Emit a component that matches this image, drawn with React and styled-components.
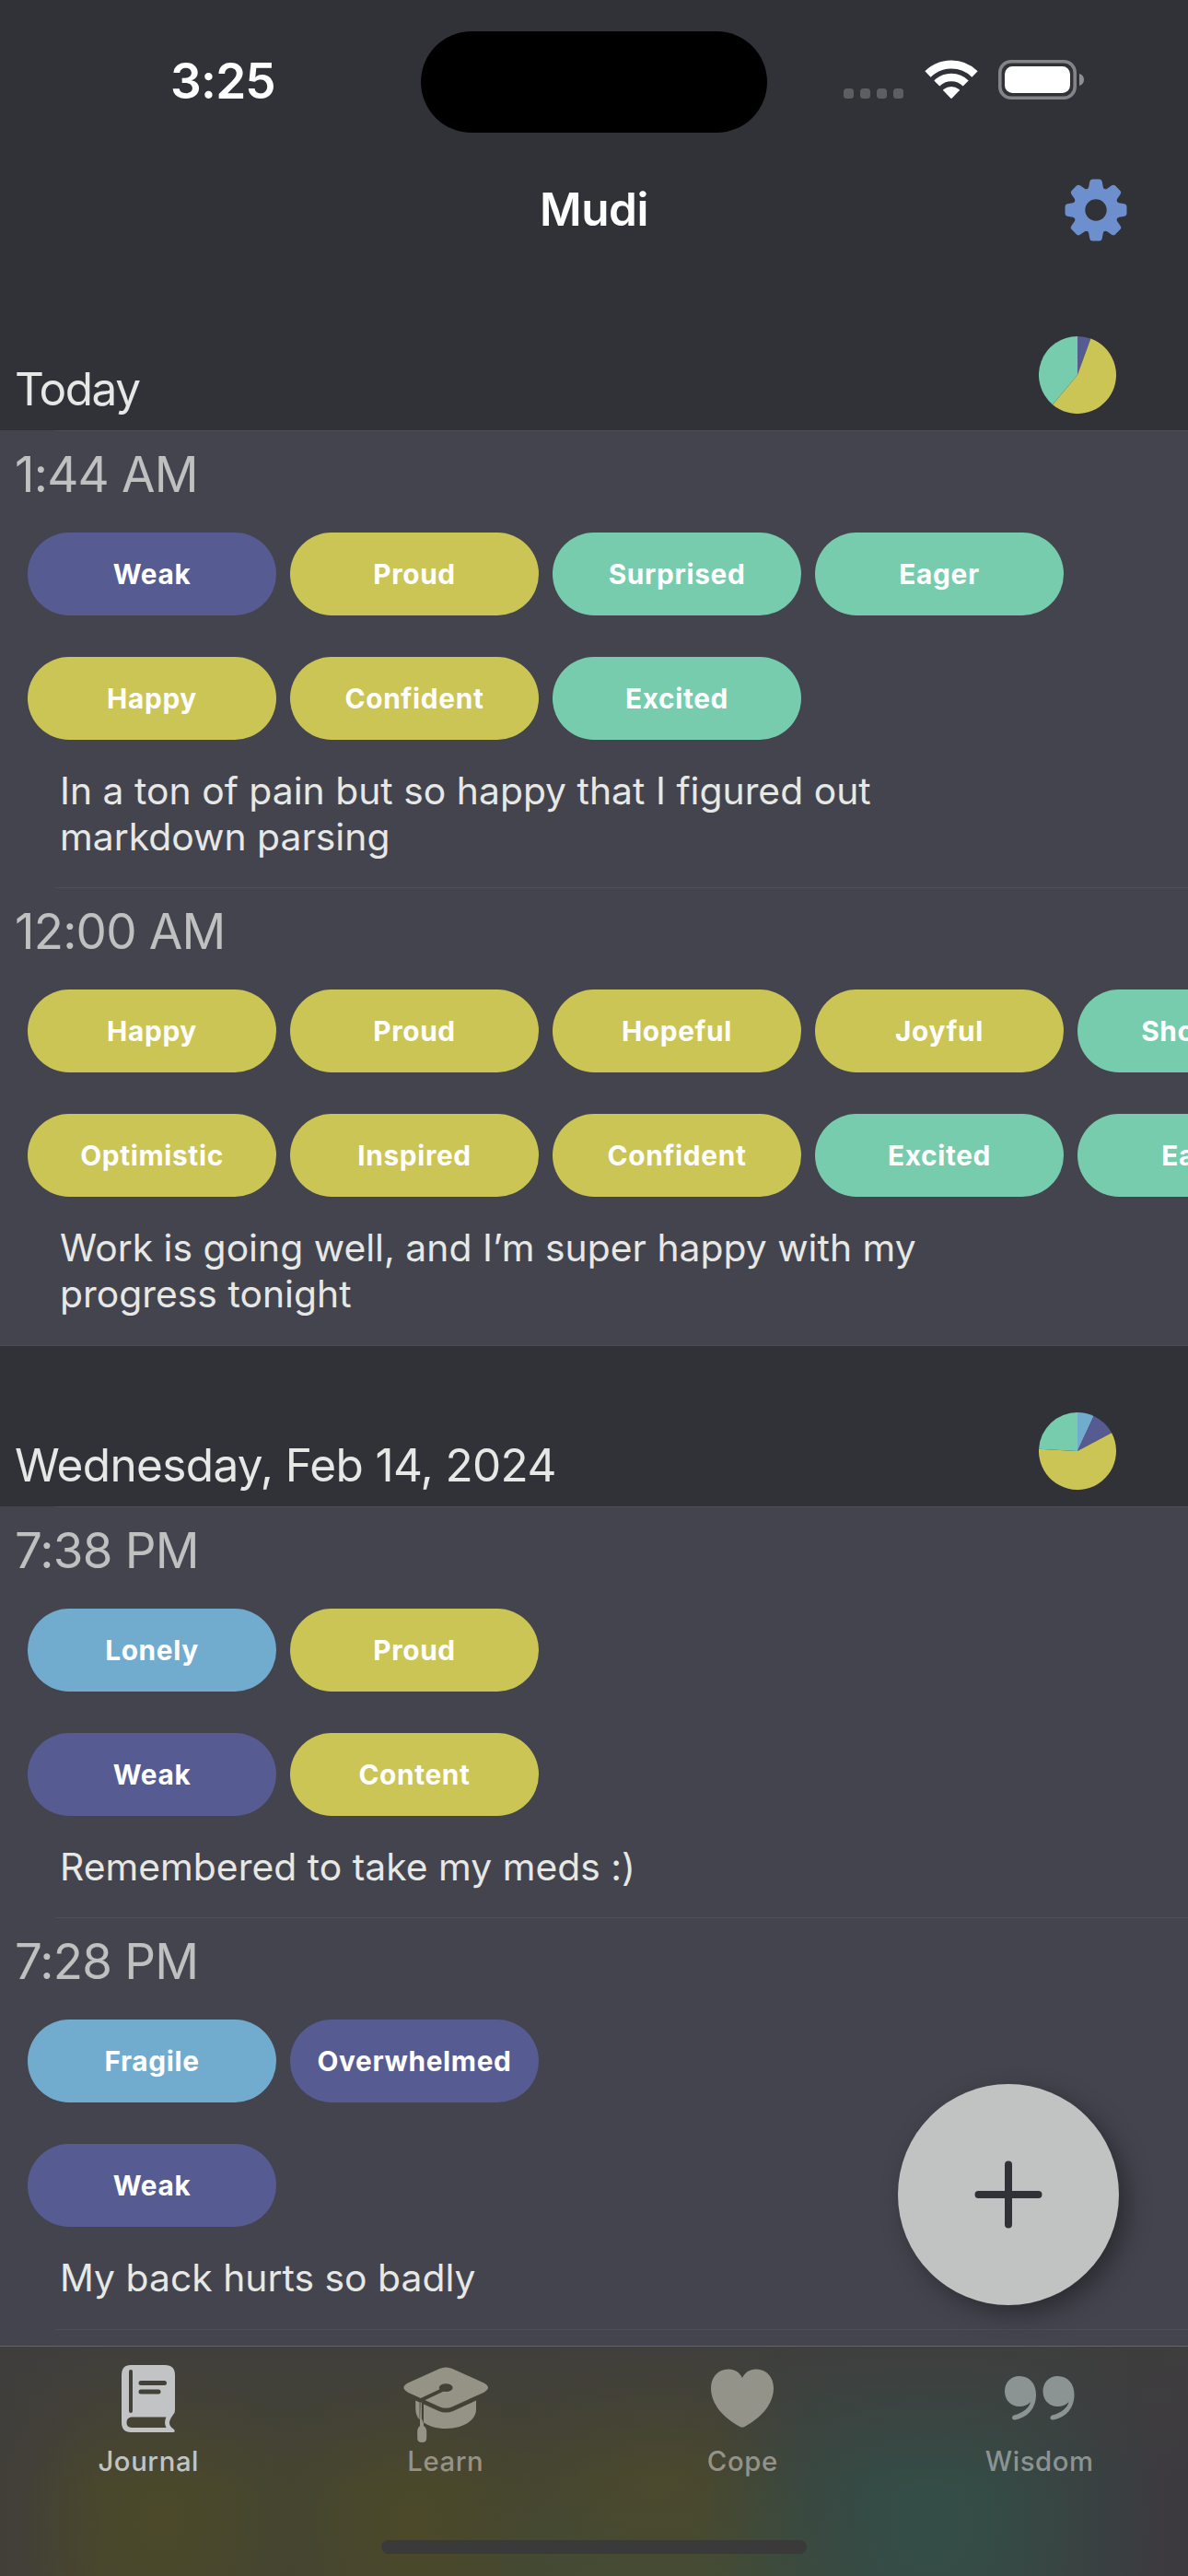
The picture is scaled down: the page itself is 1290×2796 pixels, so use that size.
import React from "react";
import styled, { createGlobalStyle } from "styled-components";

const colors = {
  base: "#313237",
  panel: "#44444e",
  yellow: "#cbc555",
  green: "#76ccad",
  purple: "#565b92",
  blue: "#71accf",
  silver: "#c1c3c2",
  text: "#e6e8e6",
};

const Global = createGlobalStyle`
  * { box-sizing: border-box; }
  body {
    margin: 0;
    background: ${colors.base};
    font-family: Inter, "Liberation Sans", sans-serif;
  }
`;

const Screen = styled.div`
  position: relative;
  display: flex;
  flex-direction: column;
  width: 1290px;
  height: 2796px;
  overflow: hidden;
  background: ${colors.base};
`;

const StatusBar = styled.header`
  display: grid;
  flex: none;
  grid-template-columns: 457px 376px 457px;
  height: 177px;
  padding-top: 33px;
  align-items: start;
`;

const Clock = styled.div`
  padding-left: 27px;
  line-height: 111px;
  text-align: center;
  font-size: 53px;
  font-weight: 600;
  letter-spacing: -0.8px;
  color: #fff;
`;

const Island = styled.div`
  height: 110px;
  margin-top: 1px;
  border-radius: 55px;
  background: #000;
`;

const Indicators = styled.div`
  display: flex;
  align-items: flex-end;
  height: 75px;
  padding-left: 83px;
`;

const Dot = styled.i`
  width: 11px;
  height: 11px;
  margin-bottom: 1px;
  border-radius: 3.5px;
  background: #5e5d62;

  & + & { margin-left: 7px; }
`;

const WifiIcon = styled.svg`
  margin-left: 23px;
`;

const BatteryIcon = styled.svg`
  margin-left: 22px;
`;

const NavBar = styled.nav`
  display: grid;
  flex: none;
  grid-template-columns: 1fr 1fr 1fr;
  align-items: center;
  height: 102px;
  padding: 0 65px;
`;

const Title = styled.h1`
  grid-column: 2;
  margin: 0;
  padding-bottom: 2px;
  text-align: center;
  font-size: 49.5px;
  line-height: 60px;
  font-weight: 600;
  letter-spacing: -0.5px;
  color: #fff;
`;

const GearButton = styled.button`
  justify-self: end;
  display: flex;
  padding: 0;
  border: 0;
  background: none;
`;

const List = styled.main`
  flex: 1;
  min-height: 0;
  display: flex;
  flex-direction: column;
  padding-top: 13px;
`;

const DayHeader = styled.div`
  display: flex;
  flex: none;
  justify-content: space-between;
  align-items: flex-end;
  height: 175px;
  padding: 0 78px 18px 16px;
  border-top: 1px solid ${(p) => (p.$ruled ? "#4b4b52" : "transparent")};
`;

const DayName = styled.h2`
  margin: 0 0 -3px;
  font-size: 49.5px;
  line-height: 60px;
  font-weight: 400;
  letter-spacing: ${(p) => p.$tracking}px;
  color: ${colors.text};
`;

const Entry = styled.article`
  flex: none;
  height: ${(p) => p.$height}px;
  background: linear-gradient(#4e4e55, #4e4e55) 60px 0 / 100% 1px no-repeat ${colors.panel};
`;

const Time = styled.h3`
  margin: 0;
  padding: 15px 0 0 16px;
  height: 111px;
  font-size: 52.9px;
  line-height: 66px;
  font-weight: 400;
  letter-spacing: -0.8px;
  color: #c0c0c0;
`;

const MoodRows = styled.div`
  display: flex;
  flex-direction: column;
  gap: 45px;
  overflow: hidden;
`;

const MoodRow = styled.div`
  display: flex;
  gap: 15px;
  padding-left: 30px;
`;

const Pill = styled.span`
  flex: none;
  width: 270px;
  height: 90px;
  border-radius: 45px;
  background: ${(p) => colors[p.$tone]};
  color: #fff;
  text-align: center;
  font-size: 29.8px;
  line-height: 91px;
  font-weight: 700;
  letter-spacing: 0.65px;
`;

const Note = styled.p`
  width: 1040px;
  margin: 30px 0 0 65px;
  font-size: 40.8px;
  line-height: 50px;
  letter-spacing: 0.03px;
  white-space: pre-line;
  color: ${colors.text};
`;

const AddButton = styled.button`
  position: absolute;
  right: 75px;
  top: 2262px;
  display: flex;
  align-items: center;
  justify-content: center;
  width: 240px;
  height: 240px;
  padding: 0 1px 1px 0;
  border: 0;
  border-radius: 50%;
  background: ${colors.silver};
  box-shadow: 9px 9px 24px rgba(20, 20, 22, 0.5);
`;

const TabBar = styled.footer`
  position: absolute;
  left: 0;
  right: 0;
  bottom: 0;
  display: flex;
  flex-direction: column;
  align-items: center;
  height: 250px;
  border-top: 1px solid #64656b;
  background:
    linear-gradient(rgba(63, 62, 62, 0.85), rgba(63, 62, 62, 0) 60%),
    radial-gradient(ellipse 250px 330px at 1010px 190px, #344d46 12%, rgba(52, 77, 70, 0.45) 55%, rgba(52, 77, 70, 0) 100%),
    radial-gradient(ellipse 150px 190px at 175px 190px, #4b492a 10%, rgba(75, 73, 42, 0) 100%),
    radial-gradient(ellipse 150px 190px at 450px 190px, #4b492a 10%, rgba(75, 73, 42, 0) 100%),
    radial-gradient(ellipse 170px 170px at 715px 130px, #4b492d 10%, rgba(75, 73, 45, 0) 100%),
    radial-gradient(ellipse 260px 140px at 710px 255px, #424e36 10%, rgba(66, 78, 54, 0) 100%),
    linear-gradient(90deg, #413f39, #464431 9%, #454431 58%, #3f443b 66%, #3b4442 74%, #3b4341 84%, #3b3c3f 93%, #3d3a3f);
`;

const Tabs = styled.div`
  display: grid;
  grid-template-columns: repeat(4, 1fr);
  width: 1290px;
  height: 210px;
`;

const Tab = styled.a`
  display: flex;
  flex-direction: column;
  align-items: center;
  padding-top: 12px;
  color: ${(p) => p.$color};
  font-size: 29.3px;
  line-height: 34px;
  font-weight: 500;
  letter-spacing: 0.6px;

  svg { height: 96px; }
`;

const HomeIndicator = styled.div`
  width: 462px;
  height: 15px;
  border-radius: 8px;
  background: #3a3a3a;
`;

const Wifi = () => (
  <WifiIcon width="58" height="43" viewBox="0 0 58 43">
    <g fill="none" stroke="#fff">
      <path d="M3.5 15.5 A36.4 36.4 0 0 1 54.5 15.5" strokeWidth="9" />
      <path d="M13.3 25.5 A22.3 22.3 0 0 1 44.7 25.5" strokeWidth="8.6" />
    </g>
    <path d="M20.3 33.3 Q19.8 32.6 20.5 32 Q29 26 37.5 32 Q38.2 32.6 37.7 33.3 L29.8 41.6 Q29 42.4 28.2 41.6 Z" fill="#fff" />
  </WifiIcon>
);

const Battery = () => (
  <BatteryIcon width="94" height="43" viewBox="0 0 94 43">
    <rect x="1.8" y="1.8" width="81.4" height="39.4" rx="12" fill="none" stroke="#848388" strokeWidth="3.6" />
    <rect x="7" y="7" width="71" height="29" rx="8.5" fill="#fff" />
    <path d="M88 15 C91.5 16 93 18.5 93 21.5 C93 24.5 91.5 27 88 28 Z" fill="#8f8e92" />
  </BatteryIcon>
);

const Gear = () => (
  <svg width="70" height="70" viewBox="-35 -35 70 70">
    <mask id="gear-hole">
      <rect x="-35" y="-35" width="70" height="70" fill="#fff" />
      <circle r="11.7" fill="#000" />
    </mask>
    <g fill="#6d8fcd" mask="url(#gear-hole)">
      <circle r="24.4" />
      {[0, 45, 90, 135, 180, 225, 270, 315].map((a) => (
        <path
          key={a}
          transform={`rotate(${a})`}
          d="M-10.5 -22 Q-8.2 -23.2 -7.8 -25 L-6.7 -31 Q-6.2 -33.5 -3.8 -33.5 H3.8 Q6.2 -33.5 6.7 -31 L7.8 -25 Q8.2 -23.2 10.5 -22 Z"
        />
      ))}
    </g>
  </svg>
);

const Pie = ({ slices }) => {
  const r = 42;
  const total = slices.reduce((sum, [n]) => sum + n, 0);
  const at = (n) => {
    const a = (n / total) * Math.PI * 2;
    return `${r * Math.sin(a)} ${-r * Math.cos(a)}`;
  };
  let start = 0;
  return (
    <svg width="84" height="84" viewBox="-42 -42 84 84">
      {slices.map(([n, tone]) => {
        const from = start;
        start += n;
        return (
          <path key={tone} fill={colors[tone]} d={`M0 0 L${at(from)} A${r} ${r} 0 ${n * 2 > total ? 1 : 0} 1 ${at(start)} Z`} />
        );
      })}
    </svg>
  );
};

const BookIcon = () => (
  <svg width="60" viewBox="0 0 60 96" fill="currentColor">
    <path
      fillRule="evenodd"
      d="M11 8 H48 Q59 8 59 19 V57 Q59 60 57 62 Q52.500 68 53 71.500 Q53.500 75 57.500 77.500 Q59.500 79.500 58.500 80.500 Q57.500 81 55 81 H11 Q1 81 1 70 V19 Q1 8 11 8 Z M9 15 V58 Q9 60 11 60 Q13 60 13 58 V15 Q13 13 11 13 Q9 13 9 15 Z M22 25 a2.500 2.500 0 0 0 0 5 H47.500 a2.500 2.500 0 0 0 0 -5 Z M22 34.600 a2.500 2.500 0 0 0 0 5 H41 a2.500 2.500 0 0 0 0 -5 Z M12 64.500 Q6.500 65 6.500 70.500 Q6.500 75.500 12 76 H49.500 Q46.500 70.500 49.500 64.500 Z"
    />
  </svg>
);

const CapIcon = () => (
  <svg width="94" viewBox="0 0 94 96" fill="currentColor">
    <mask id="cap-cord">
      <rect width="94" height="96" fill="#fff" />
      <ellipse cx="47.200" cy="32.700" rx="7.400" ry="4.400" fill="#000" />
      <path d="M43.500 35 L17 47.500" stroke="#000" strokeWidth="4" />
    </mask>
    <path
      mask="url(#cap-cord)"
      d="M40.200 12 Q47.200 8.800 54.200 12 L88.500 27.500 Q97.500 32.500 88.500 37.700 L54.200 53.200 Q47.200 56.500 40.200 53.200 L5.900 37.700 Q-3.100 32.500 5.900 27.500 Z"
    />
    <path d="M14.200 46.500 L18.600 48.500 V67.500 Q14.200 62.500 14.200 55 Z M23 50.500 L39.500 58 Q47.200 61.200 55 58 L80 46.500 V56 C80 68 66 77 47.200 77 C37 77 28.500 74.300 23 70.200 Z" />
    <path d="M19.600 48.500 H20.800 V66 L23 71 V74 Q26.200 76 26.200 79 V87.500 Q26.200 92 21.200 92 Q16.200 92 16.200 87.500 V79 Q16.200 76 19 74 V69 Z" />
  </svg>
);

const HeartIcon = () => (
  <svg width="70" viewBox="0 0 70 96" fill="currentColor">
    <path d="M35 22 C38 16 43 12.500 50 12.500 C61 12.500 69 21 69 33 C69 50 56 65 37.500 75 Q35 76.200 32.500 75 C14 65 1 50 1 33 C1 21 9 12.500 20 12.500 C27 12.500 32 16 35 22 Z" />
  </svg>
);

const QuoteIcon = () => (
  <svg width="78" viewBox="0 0 78 96" fill="currentColor">
    {[0, 41.5].map((x) => (
      <path
        key={x}
        transform={`translate(${x} 0)`}
        d="M17 20 C28 20 35 28.500 35 40 C35 55 26 65 12 67.500 C8.500 68 8 63.500 11 62.500 C21 60 27.500 54.500 29 48 C26 51.500 22 53 17 53 C7.500 53 1 46 1 36.500 C1 27 7.500 20 17 20 Z"
      />
    ))}
  </svg>
);

const DAYS = [
  {
    name: "Today",
    tracking: -1.5,
    slices: [[1, "purple"], [10, "yellow"], [7, "green"]],
    entries: [
      {
        time: "1:44 AM",
        height: 496,
        rows: [
          [["Weak", "purple"], ["Proud", "yellow"], ["Surprised", "green"], ["Eager", "green"]],
          [["Happy", "yellow"], ["Confident", "yellow"], ["Excited", "green"]],
        ],
        note: "In a ton of pain but so happy that I figured out\nmarkdown parsing",
      },
      {
        time: "12:00 AM",
        height: 497,
        rows: [
          [["Happy", "yellow"], ["Proud", "yellow"], ["Hopeful", "yellow"], ["Joyful", "yellow"], ["Shocked", "green"]],
          [["Optimistic", "yellow"], ["Inspired", "yellow"], ["Confident", "yellow"], ["Excited", "green"], ["Eager", "green"]],
        ],
        note: "Work is going well, and I’m super happy with my\nprogress tonight",
      },
    ],
  },
  {
    name: "Wednesday, Feb 14, 2024",
    tracking: -0.65,
    slices: [[2, "blue"], [3, "purple"], [17, "yellow"], [7, "green"]],
    entries: [
      {
        time: "7:38 PM",
        height: 446,
        rows: [
          [["Lonely", "blue"], ["Proud", "yellow"]],
          [["Weak", "purple"], ["Content", "yellow"]],
        ],
        note: "Remembered to take my meds :)",
      },
      {
        time: "7:28 PM",
        height: 447,
        rows: [[["Fragile", "blue"], ["Overwhelmed", "purple"]], [["Weak", "purple"]]],
        note: "My back hurts so badly",
      },
    ],
  },
];

const TABS = [
  { label: "Journal", Icon: BookIcon, color: "#c1c3c4" },
  { label: "Learn", Icon: CapIcon, color: "#949386" },
  { label: "Cope", Icon: HeartIcon, color: "#949389" },
  { label: "Wisdom", Icon: QuoteIcon, color: "#8b9393" },
];

export default function App() {
  return (
    <Screen>
      <Global />
      <StatusBar>
        <Clock>3:25</Clock>
        <Island />
        <Indicators>
          <Dot /><Dot /><Dot /><Dot />
          <Wifi />
          <Battery />
        </Indicators>
      </StatusBar>
      <NavBar>
        <Title>Mudi</Title>
        <GearButton aria-label="Settings"><Gear /></GearButton>
      </NavBar>
      <List>
        {DAYS.map((day, i) => (
          <React.Fragment key={day.name}>
            <DayHeader $ruled={i > 0}>
              <DayName $tracking={day.tracking}>{day.name}</DayName>
              <Pie slices={day.slices} />
            </DayHeader>
            {day.entries.map((entry) => (
              <Entry key={entry.time} $height={entry.height}>
                <Time>{entry.time}</Time>
                <MoodRows>
                  {entry.rows.map((row, r) => (
                    <MoodRow key={r}>
                      {row.map(([label, tone]) => (
                        <Pill key={label} $tone={tone}>{label}</Pill>
                      ))}
                    </MoodRow>
                  ))}
                </MoodRows>
                <Note>{entry.note}</Note>
              </Entry>
            ))}
          </React.Fragment>
        ))}
        <Entry $height={447} />
      </List>
      <AddButton aria-label="Add entry">
        <svg width="74" height="74" viewBox="0 0 74 74">
          <path d="M37 4.500 V69.500 M4.500 37 H69.500" stroke="#313237" strokeWidth="8" strokeLinecap="round" />
        </svg>
      </AddButton>
      <TabBar>
        <Tabs>
          {TABS.map(({ label, Icon, color }) => (
            <Tab key={label} $color={color}>
              <Icon />
              {label}
            </Tab>
          ))}
        </Tabs>
        <HomeIndicator />
      </TabBar>
    </Screen>
  );
}
